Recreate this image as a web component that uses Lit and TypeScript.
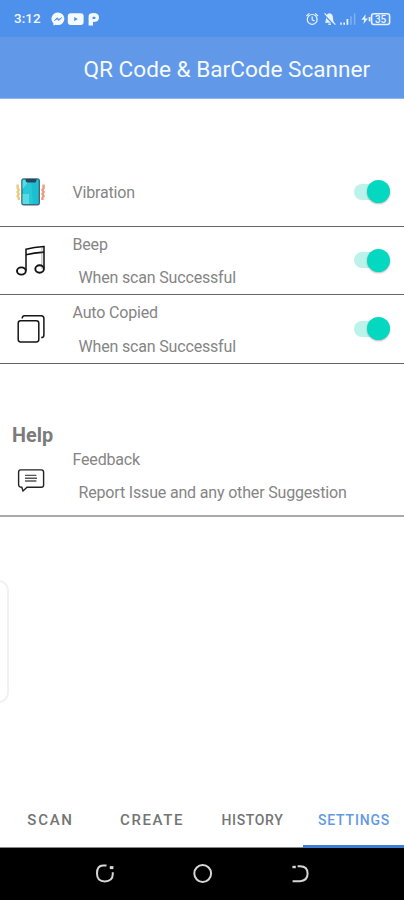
import { LitElement, html, svg, css } from "lit";
import { customElement, property } from "lit/decorators.js";

const icons = {
  phone: svg`
    <path d="M2.6 8.6v3.4l1.2 2-1.2 2 1.2 2-1.2 2 1.2 2v2" fill="none" stroke="#ecca78" stroke-width="2.4"/>
    <path d="M28.6 8.6v3.4l-1.2 2 1.2 2-1.2 2 1.2 2-1.2 2v2" fill="none" stroke="#f09a7c" stroke-width="2.4"/>
    <rect x="6.2" y="2.2" width="18.8" height="27.2" rx="2.6" fill="#3d6a80"/>
    <rect x="7.6" y="3.6" width="15.8" height="24.4" rx="1" fill="#27c9d6"/>
    <path d="M7.6 13l7.4-9h-6.4q-1 0-1 1zM7.6 18h6.4v10h-5.4q-1 0-1-1z" fill="#5adbe2"/>
    <path d="M16 4h7.4v24H18z" fill="#1bbfd0"/>
    <path d="M10.6 3h10.8v1.8l-1 1.6h-8.8l-1-1.6z" fill="#28465f"/>`,
  music: svg`
    <g fill="none" stroke="#111" stroke-width="1.5">
      <path d="M11 26.4V5.2Q19 3.2 29 2.6V24.4"/>
      <path d="M11 10.8Q19 8.6 29 8.1" stroke-width="1.6"/>
      <path d="M26.9 3v22" stroke-width=".6" stroke="#777"/>
      <ellipse cx="6.4" cy="27" rx="4.4" ry="3.6" stroke-width="1.9"/>
      <ellipse cx="24.6" cy="25" rx="4.3" ry="3.7" stroke-width="1.9"/>
    </g>`,
  copy: svg`
    <g fill="none" stroke="#161616" stroke-width="1.5">
      <rect x="3.2" y="7.8" width="20.6" height="21.2" rx="2.4"/>
      <path d="M7.2 5.5Q7.2 2.7 9.6 2.7H26.2Q28.9 2.7 28.9 5.6V22Q28.9 24.6 26.2 24.6"/>
    </g>`,
  chat: svg`
    <path d="M5.4 4.9H26.4Q28.6 4.9 28.6 7.2V20Q28.6 22.3 26.4 22.3H12L8 26L6.8 22.3Q3.6 22.3 3.6 19.6V7.2Q3.6 4.9 5.4 4.9Z" fill="none" stroke="#222" stroke-width="1.4"/>
    <path d="M10 10.4H21.4M10 13.2H22M10 16H21.4" stroke="#555" stroke-width="1.4"/>`,
};

@customElement("status-bar")
class StatusBar extends LitElement {
  static styles = css`
    :host { display: flex; align-items: center; height: 37px; background: #4e91ec; color: #f3f8ff; padding: 0 13px 0 14px; box-sizing: border-box; }
    .time { font: 500 13.4px/16px Roboto, sans-serif; letter-spacing: .1px; width: 37px; }
    svg { display: block; flex: none; }
    .right { margin-left: auto; }
    .pct { font: 500 10px Roboto, sans-serif; }
  `;
  render() {
    return html`
      <span class="time">3:12</span>
      <svg width="50" height="16" viewBox="0 0 50 16" fill="#f5faff">
        <path d="M6.9 1.5A6.5 6.3 0 0 1 6.9 14.1Q5.6 14.1 4.6 13.7L2.4 14.6V12.4A6.4 6.4 0 0 1 6.9 1.5Z"/>
        <path d="M3.4 9.6L6 6.8L8 8.4L10.6 6.6L8 9.6L6 8Z" stroke="#4e91ec" stroke-width=".7" fill="#4e91ec"/>
        <rect x="16.8" y="2.2" width="15.8" height="11.8" rx="3"/>
        <path d="M23.2 5.9v4.4l3.6-2.2z" fill="#4e91ec"/>
        <path d="M37.6 14.4V5Q37.6 2 42.6 2Q48 2 48 6.6Q48 11.2 42 11.1V14.4ZM41.6 5.8v2.3h1.8q1.2-.2 1.2-1.2t-1.2-1.1z" fill-rule="evenodd"/>
      </svg>
      <svg class="right" width="86" height="16" viewBox="0 0 86 16" fill="none" stroke="#e8f2ff">
        <circle cx="7.2" cy="8.4" r="4.9" stroke-width="1.2"/>
        <path d="M1.4 5L4.4 2.4M10 2.4L13 5M7.2 5.6V8.8L9.6 10" stroke-width="1.2"/>
        <path d="M20 11.8Q21 10 21 7Q21 3 24.5 2.3Q28 3 28 7Q28 10 29.2 11.8ZM23.4 12.6h2.4v1.4h-2.4z" fill="#e8f2ff" stroke="none"/>
        <path d="M19 3.8L29.4 14.2" stroke="#4e91ec" stroke-width="1.4"/>
        <path d="M19.6 2.4L30.4 13.6" stroke-width="1.2"/>
        <path d="M36 11.4v2.4M39.2 11.4v2.4" stroke-width="1.6"/>
        <path d="M42.4 8v5.8" stroke-width="1.8"/>
        <path d="M46 5.2v8.6M49.6 2.6v11.2" stroke-width="1.4" opacity=".35"/>
        <path d="M60.6 3.2L56.4 8.8H59.2L58.4 13L63 7.4H60.2Z" fill="#e8f2ff" stroke="none"/>
        <path d="M64.6 6v4.4" stroke-width="1.8"/>
        <rect x="66.6" y="2.7" width="18" height="10.8" rx="2.2" stroke-width="1.6"/>
        <text class="pct" x="69.9" y="11.7" fill="#e8f2ff" stroke="none">35</text>
      </svg>`;
  }
}

@customElement("toggle-switch")
class ToggleSwitch extends LitElement {
  static styles = css`
    :host { display: block; }
    .track { width: 36px; height: 16px; border-radius: 8px; background: #bbf3ea; display: flex; align-items: center; justify-content: flex-end; }
    .knob { width: 23px; height: 23px; border-radius: 50%; background: #05d8c0; box-shadow: 0 1px 2px rgba(0,0,0,.28); flex: none; }
  `;
  render() {
    return html`<div class="track"><div class="knob"></div></div>`;
  }
}

@customElement("setting-row")
class SettingRow extends LitElement {
  @property() icon: keyof typeof icons = "phone";
  @property() heading = "";
  @property() detail = "";
  @property({ type: Boolean }) toggle = false;
  static styles = css`
    :host { display: flex; align-items: center; box-sizing: border-box; padding: 0 14px 0 15px; font: 400 16px/20px Roboto, sans-serif; letter-spacing: -.17px; color: #858585; }
    svg { display: block; width: 32px; height: 32px; flex: none; }
    .texts { flex: 1; margin-left: 25.5px; padding-top: var(--text-top, 2.5px); padding-bottom: var(--text-bottom, 0px); white-space: nowrap; }
    .detail { margin: 13.6px 0 0 6px; }
  `;
  render() {
    return html`
      <svg viewBox="0 0 32 32">${icons[this.icon]}</svg>
      <div class="texts">
        <div>${this.heading}</div>
        ${this.detail ? html`<div class="detail">${this.detail}</div>` : null}
      </div>
      ${this.toggle ? html`<toggle-switch></toggle-switch>` : null}`;
  }
}

@customElement("app-root")
class AppRoot extends LitElement {
  static styles = css`
    :host { display: flex; flex-direction: column; position: relative; width: 404px; height: 900px; overflow: hidden; background: #fff; font-family: Roboto, sans-serif; }
    header { box-sizing: border-box; height: 62px; background: #6199e8; border-bottom: 1px solid #8fb6ee; color: #f6faff; padding: 19px 0 0 83.5px; font-size: 22.6px; line-height: 28px; white-space: nowrap; }
    .settings { padding-top: 59px; }
    .row { border-bottom: 1.5px solid #666; height: 68.5px; }
    .help { font-weight: 700; font-size: 19.8px; line-height: 24px; color: #7b7b7b; margin: 60px 0 0 12px; }
    .feedback { height: 69px; border-bottom: 2px solid #a9a9a9; --text-top: 0px; --text-bottom: 9px; }
    .edge { position: absolute; left: -12px; top: 580px; width: 21px; height: 123px; box-sizing: border-box; border: 2px solid #f1f1f1; border-radius: 13px; }
    .tabs { display: grid; grid-template-columns: repeat(4, 1fr); height: 55px; margin-top: auto; }
    .tab { box-sizing: border-box; display: flex; align-items: center; justify-content: center; padding-top: 0; border-bottom: 1px solid #888; font-weight: 500; font-size: 15px; letter-spacing: 1.7px; color: #747474; }
    .create { letter-spacing: 1.6px; padding-left: 1px; }
    .small { font-size: 14px; letter-spacing: .65px; }
    .active { color: #6499e4; border-bottom: 3px solid #3d7dd4; padding: 2px 0 0 1px; letter-spacing: .8px; }
    nav { background: #000; height: 52px; }
    nav svg { display: block; }
  `;
  render() {
    return html`
      <status-bar></status-bar>
      <header>QR Code &amp; BarCode Scanner</header>
      <section class="settings">
        <setting-row class="row" icon="phone" heading="Vibration" toggle></setting-row>
        <setting-row class="row" icon="music" heading="Beep" detail="When scan Successful" toggle></setting-row>
        <setting-row class="row" icon="copy" heading="Auto Copied" detail="When scan Successful" toggle></setting-row>
        <div class="help">Help</div>
        <setting-row class="feedback" icon="chat" heading="Feedback" detail="Report Issue and any other Suggestion"></setting-row>
      </section>
      <div class="edge"></div>
      <div class="tabs">
        <div class="tab">SCAN</div>
        <div class="tab create">CREATE</div>
        <div class="tab small">HISTORY</div>
        <div class="tab small active">SETTINGS</div>
      </div>
      <nav>
        <svg width="404" height="52" viewBox="0 1 404 52" fill="none" stroke="#d6d6d6" stroke-width="2">
          <path d="M106.5 18.6H103Q97 18.6 97 26.5T104.8 34.4T112.8 27V25.2"/>
          <path d="M109.8 20.6h3.6" stroke-width="3"/>
          <circle cx="202.7" cy="26.5" r="8.4"/>
          <path d="M292.4 20h3.4" stroke-width="2.4"/>
          <path d="M297.6 19.2H300Q307.6 19.2 307.6 26.6T300 34.2H292.6"/>
        </svg>
      </nav>`;
  }
}
